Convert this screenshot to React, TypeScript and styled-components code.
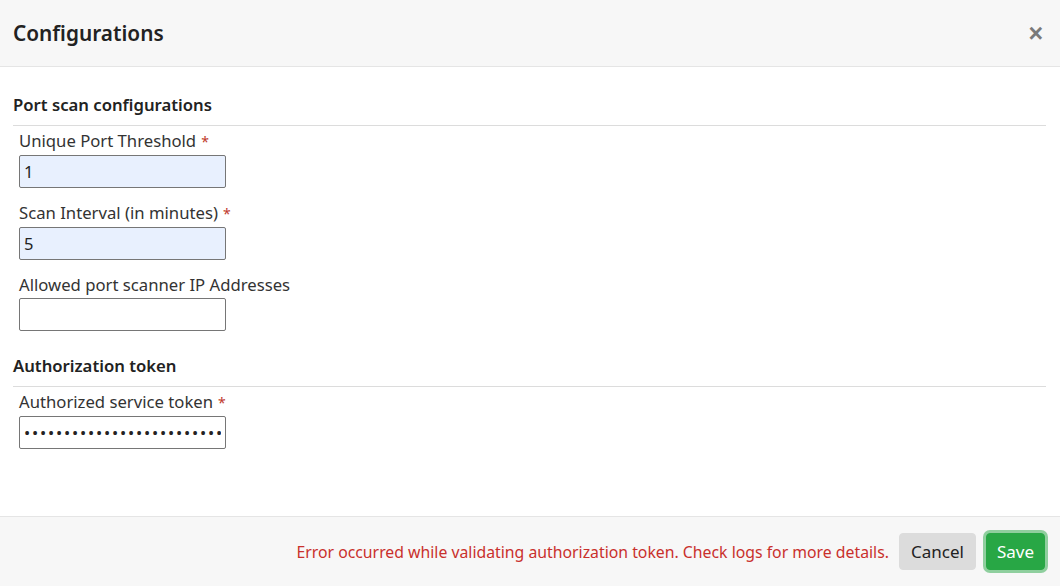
import React from "react";
import styled, { createGlobalStyle } from "styled-components";

const GlobalStyle = createGlobalStyle`
  html, body {
    margin: 0;
    padding: 0;
    background: #ffffff;
  }
  body {
    font-family: "Noto Sans", "Open Sans", "Liberation Sans", sans-serif;
    color: #333333;
  }
  * {
    box-sizing: border-box;
  }
`;

const Modal = styled.div`
  width: 1060px;
  height: 586px;
  display: flex;
  flex-direction: column;
  background: #ffffff;
`;

const Header = styled.div`
  height: 67px;
  flex: none;
  display: flex;
  align-items: center;
  justify-content: space-between;
  padding: 0 17px 0 13px;
  background: #f7f7f7;
  border-bottom: 1px solid #e5e5e5;
`;

const Title = styled.h4`
  margin: 0;
  font-size: 20.8px;
  font-weight: 600;
  color: #222222;
`;

const CloseButton = styled.button`
  border: none;
  background: transparent;
  padding: 0;
  font-family: "Liberation Sans", sans-serif;
  font-size: 25px;
  font-weight: 700;
  line-height: 1;
  color: #7a7a7a;
  cursor: pointer;
`;

const Body = styled.div`
  flex: 1;
  padding: 26px 14px 0 13px;
`;

const Section = styled.section`
  & + & {
    margin-top: 23px;
  }
`;

const SectionTitle = styled.div`
  font-size: 16.7px;
  font-weight: 600;
  line-height: 24px;
  color: #222222;
  padding-bottom: 8px;
  border-bottom: 1px solid #dcdcdc;
`;

const Field = styled.div`
  padding-left: 6px;
  margin-top: 2px;
  & + & {
    margin-top: 12px;
  }
`;

const Label = styled.label`
  display: block;
  font-size: 16.7px;
  line-height: 26px;
  color: #333333;
  white-space: nowrap;
`;

const Required = styled.span`
  color: #c0392b;
  margin-left: 5px;
  font-size: 14px;
`;

const Input = styled.input<{ $filled?: boolean; $masked?: boolean }>`
  display: block;
  width: 207px;
  height: 33px;
  padding: 0 4px;
  border: 1px solid #767676;
  border-radius: 2px;
  background: ${(p) => (p.$filled ? "#e8f0fe" : "#ffffff")};
  font-family: "Noto Sans", "Open Sans", sans-serif;
  font-size: 16.5px;
  letter-spacing: ${(p) => (p.$masked ? "1.8px" : "normal")};
  color: #222222;
  outline: none;
`;

const Footer = styled.div`
  height: 70px;
  flex: none;
  display: flex;
  align-items: center;
  justify-content: flex-end;
  gap: 10px;
  padding: 0 15px 0 13px;
  background: #f7f7f7;
  border-top: 1px solid #e5e5e5;
`;

const ErrorText = styled.span`
  font-size: 15.8px;
  color: #c9302c;
  white-space: nowrap;
`;

const Button = styled.button<{ $primary?: boolean }>`
  height: 37px;
  padding: 0 ${(p) => (p.$primary ? "10px" : "11px")};
  border-radius: 4px;
  font-family: "Noto Sans", "Open Sans", sans-serif;
  font-size: 17px;
  cursor: pointer;
  border: 1px solid ${(p) => (p.$primary ? "#28a745" : "#dcdcdc")};
  background: ${(p) => (p.$primary ? "#28a745" : "#dcdcdc")};
  color: ${(p) => (p.$primary ? "#ffffff" : "#222222")};
  box-shadow: ${(p) => (p.$primary ? "0 0 0 3px rgba(40, 167, 69, 0.5)" : "none")};
`;

type FieldSpec = {
  label: string;
  required?: boolean;
  value: string;
  type?: string;
  filled?: boolean;
};

const portFields: FieldSpec[] = [
  { label: "Unique Port Threshold", required: true, value: "1", filled: true },
  { label: "Scan Interval (in minutes)", required: true, value: "5", filled: true },
  { label: "Allowed port scanner IP Addresses", value: "" },
];

const tokenFields: FieldSpec[] = [
  {
    label: "Authorized service token",
    required: true,
    value: "abcdefghijklmnopqrstuvwxyz0123456789",
    type: "password",
  },
];

function FormField({ spec }: { spec: FieldSpec }) {
  return (
    <Field>
      <Label>
        {spec.label}
        {spec.required && <Required>*</Required>}
      </Label>
      <Input
        type={spec.type || "text"}
        defaultValue={spec.value}
        $filled={spec.filled}
        $masked={spec.type === "password"}
        readOnly
      />
    </Field>
  );
}

export default function App() {
  return (
    <>
      <GlobalStyle />
      <Modal>
        <Header>
          <Title>Configurations</Title>
          <CloseButton aria-label="Close">×</CloseButton>
        </Header>
        <Body>
          <Section>
            <SectionTitle>Port scan configurations</SectionTitle>
            {portFields.map((f) => (
              <FormField key={f.label} spec={f} />
            ))}
          </Section>
          <Section>
            <SectionTitle>Authorization token</SectionTitle>
            {tokenFields.map((f) => (
              <FormField key={f.label} spec={f} />
            ))}
          </Section>
        </Body>
        <Footer>
          <ErrorText>
            Error occurred while validating authorization token. Check logs for more details.
          </ErrorText>
          <Button>Cancel</Button>
          <Button $primary>Save</Button>
        </Footer>
      </Modal>
    </>
  );
}
